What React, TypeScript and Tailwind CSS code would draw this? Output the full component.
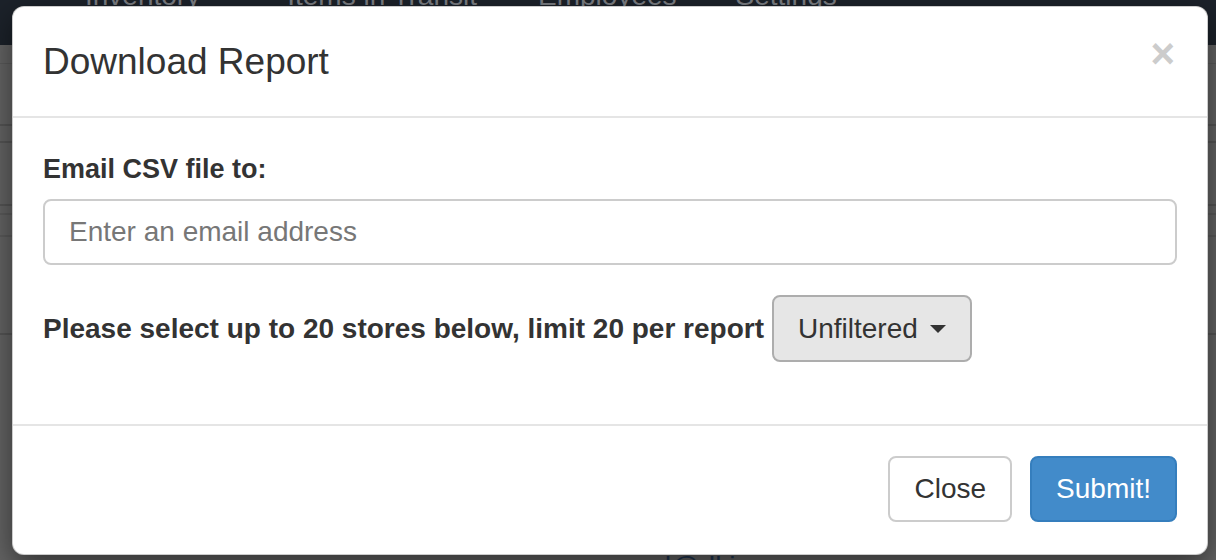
const NAV = [
  { label: "Inventory", cls: "mr-[87px]" },
  { label: "Items in Transit", cls: "mr-[61px]" },
  { label: "Employees", cls: "mr-[59px]" },
  { label: "Settings", cls: "" },
];

function Backdrop() {
  return (
    <div className="flex flex-col">
      <nav className="h-[45px] bg-[#1c222a] overflow-hidden">
        <div className="flex pl-[85px] mt-[-18px] text-[28px] leading-[28px] text-[#7c7f84]">
          {NAV.map((n) => (
            <span key={n.label} className={n.cls}>
              {n.label}
            </span>
          ))}
        </div>
      </nav>
      {/* dimmed table rows behind the modal */}
      <div className="h-[19px] border-b border-[#5a5a5a]" />
      <div className="h-[62px] border-b-2 border-[#555]" />
      <div className="h-[17px] border-b-2 border-[#555]" />
      <div className="h-[63px] border-b-2 border-[#555]" />
      <div className="h-[9px] border-b-2 border-[#5a5a5a]" />
      <div className="h-[22px] border-b-2 border-[#5a5a5a]" />
      <div className="h-[98px] border-b-2 border-[#555]" />
      <div className="pt-[218px] pl-[640px] text-[28px] leading-[28px] text-[#1f3550]">
        ad@dkinc.com
      </div>
    </div>
  );
}

export default function App() {
  return (
    <div className="relative w-[1216px] h-[560px] overflow-hidden bg-[#646464] font-['Liberation_Sans',Arial,sans-serif]">
      <Backdrop />

      <div className="absolute left-[12px] top-[6px] w-[1196px] bg-white border border-black/20 rounded-[12px] shadow-[0_10px_30px_rgba(0,0,0,0.5)] text-[#333]">
        <div className="flex items-start justify-between p-[30px] border-b-2 border-[#e5e5e5]">
          <h4 className="text-[37px] leading-[49px] font-normal">Download Report</h4>
          <button className="mt-[-4px] mr-[2px] text-[42px] leading-[42px] font-bold text-[#cccccc]">
            ×
          </button>
        </div>

        <div className="px-[30px] pt-[31px] pb-[32px]">
          <div className="mb-[30px]">
            <label className="block mb-[10px] text-[27px] leading-[40px] font-bold">
              Email CSV file to:
            </label>
            <input
              type="text"
              placeholder="Enter an email address"
              className="block w-full h-[66px] px-[24px] border-2 border-[#cccccc] rounded-[8px] text-[28px] text-[#555] placeholder:text-[#777] outline-none"
            />
          </div>
          <div className="mb-[30px] flex items-center gap-[8px]">
            <span className="text-[28px] leading-[40px] font-bold">
              Please select up to 20 stores below, limit 20 per report
            </span>
            <button className="flex items-center h-[67px] px-[24px] bg-[#e6e6e6] border-2 border-[#adadad] rounded-[8px] text-[28px] leading-[40px]">
              Unfiltered
              <span className="ml-[12px] w-0 h-0 border-t-[8px] border-t-[#333] border-x-[8px] border-x-transparent" />
            </button>
          </div>
        </div>

        <div className="flex justify-end gap-[18px] px-[30px] pt-[30px] pb-[32px] border-t-2 border-[#e5e5e5]">
          <button className="h-[66px] px-[24px] bg-white border-2 border-[#cccccc] rounded-[8px] text-[28px] leading-[40px] text-[#333]">
            Close
          </button>
          <button className="h-[66px] px-[24px] bg-[#428bca] border-2 border-[#357ebd] rounded-[8px] text-[28px] leading-[40px] text-white">
            Submit!
          </button>
        </div>
      </div>
    </div>
  );
}
